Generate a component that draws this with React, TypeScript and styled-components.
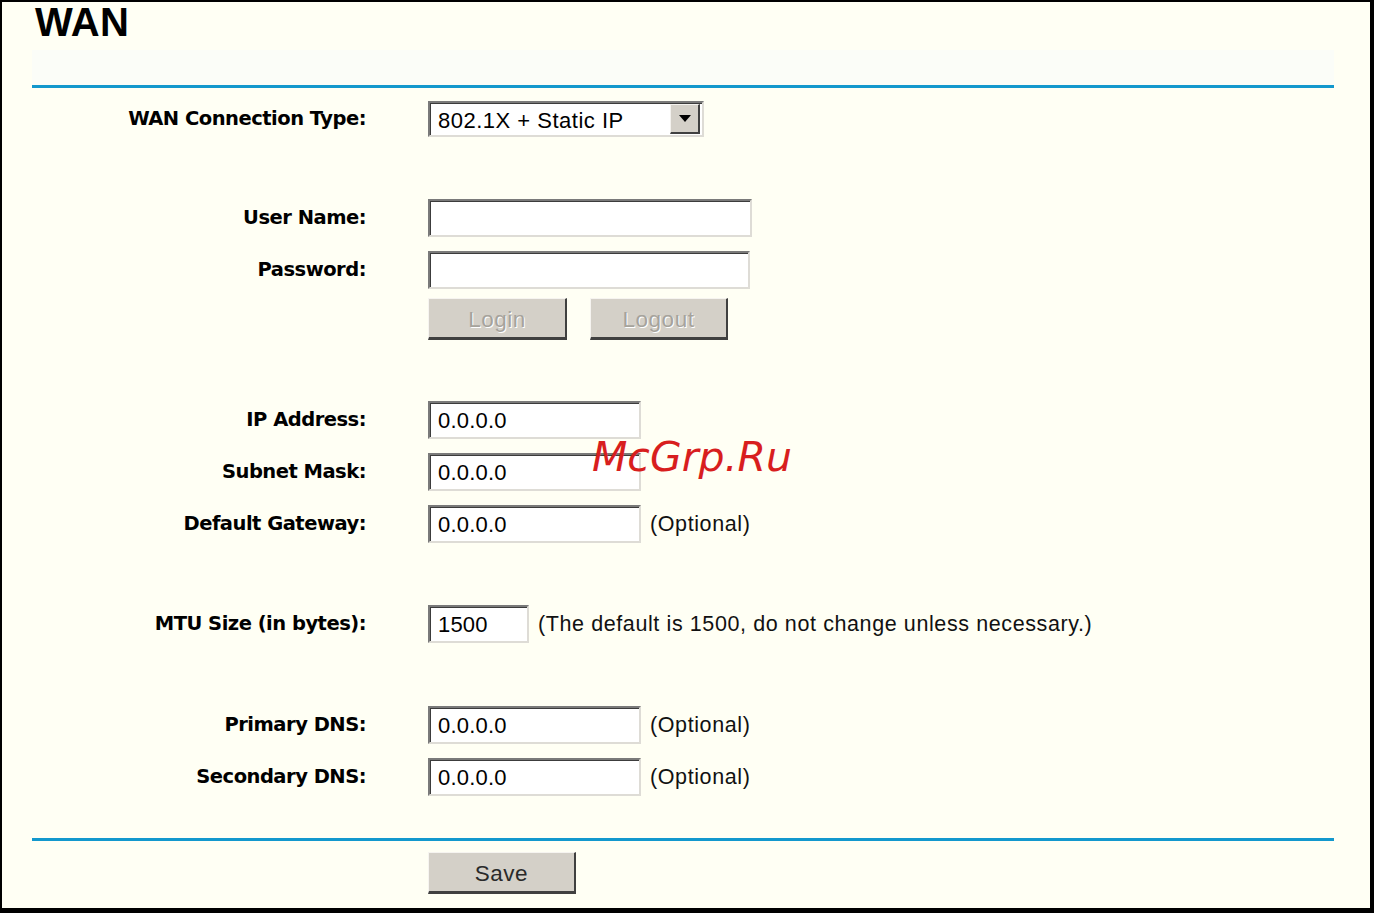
import React from 'react';
import styled, { createGlobalStyle } from 'styled-components';

const GlobalStyle = createGlobalStyle`
    html, body {
        margin: 0;
        padding: 0;
        overflow: hidden;
        background: #fffff4;
    }

    * {
        box-sizing: border-box;
    }
`;

const Frame = styled.div`
    position: relative;

    width: 1374px;
    height: 913px;

    border-style: solid;
    border-color: #000000;
    border-width: 2px 4px 5px 2px;

    background: #fffff4;

    font-family: "Liberation Sans", Arial, sans-serif;
    color: #000000;
`;

const TitleBar = styled.div`
    height: 48px;
    padding: 1px 0 0 33px;
`;

const Title = styled.h1`
    margin: 0;

    font-family: "Liberation Sans", Arial, sans-serif;
    font-weight: 700;
    font-size: 40px;
    line-height: 39px;
    letter-spacing: 0.3px;
`;

const Band = styled.div`
    width: 1302px;
    height: 35px;
    margin-left: 30px;

    background: #fbfdf8;
`;

const Rule = styled.div`
    width: 1302px;
    height: 3px;
    margin-left: 30px;

    background: #1398cd;
`;

const Form = styled.div`
    display: grid;
    grid-template-columns: 334px 1fr;
    column-gap: 62px;

    margin-left: 30px;
    padding-top: 5px;
`;

const Label = styled.div<{ $h?: number }>`
    display: flex;
    align-items: center;
    justify-content: flex-end;

    height: ${p => p.$h ?? 52}px;
    padding-bottom: 2px;

    font-family: "DejaVu Sans", Verdana, sans-serif;
    font-weight: 700;
    font-size: 19.5px;
    letter-spacing: -0.5px;
    white-space: nowrap;
`;

const Field = styled.div<{ $h?: number }>`
    display: flex;
    align-items: center;
    gap: 9px;

    height: ${p => p.$h ?? 52}px;
`;

const Spacer = styled.div<{ $h: number }>`
    grid-column: 1 / span 2;
    height: ${p => p.$h}px;
`;

const TextInput = styled.input<{ $w: number }>`
    width: ${p => p.$w}px;
    height: 38px;
    padding: 2px 0 0 8px;
    margin: 0;

    border-style: solid;
    border-width: 2px;
    border-color: #7a7a7a #dedcd6 #dedcd6 #7a7a7a;
    box-shadow: inset 1px 1px 0 #3c3c3c;
    border-radius: 0;

    background: #ffffff;
    outline: none;

    font-family: "Liberation Sans", Arial, sans-serif;
    font-size: 22px;
    letter-spacing: 0.2px;
    color: #000000;
`;

const Note = styled.span`
    font-family: "Liberation Sans", Arial, sans-serif;
    font-size: 21.5px;
    letter-spacing: 0.6px;
    color: #111111;
    white-space: nowrap;
`;

const SelectBox = styled.div`
    display: flex;
    align-items: center;
    justify-content: space-between;

    width: 276px;
    height: 36px;
    padding: 0 2px 0 8px;

    border-style: solid;
    border-width: 2px;
    border-color: #7a7a7a #dedcd6 #dedcd6 #7a7a7a;
    box-shadow: inset 1px 1px 0 #3c3c3c;

    background: #ffffff;

    font-size: 22px;
    letter-spacing: 0.5px;
`;

const SelectValue = styled.span`
    padding-top: 3px;
`;

const SelectArrow = styled.div`
    display: flex;
    align-items: center;
    justify-content: center;

    width: 30px;
    height: 30px;

    border-style: solid;
    border-width: 1px 2px 2px 1px;
    border-color: #f4f2ee #404040 #404040 #f4f2ee;

    background: #d4d0c8;
`;

const Buttons = styled.div`
    display: flex;
    gap: 23px;
`;

const Button = styled.button<{ $w: number; $disabled?: boolean }>`
    width: ${p => p.$w}px;
    height: 42px;
    padding: 3px 0 0;
    margin: 0;

    border-style: solid;
    border-width: 1px 2px 3px 1px;
    border-color: #f6f4f0 #404040 #404040 #f6f4f0;
    border-radius: 0;

    background: #d4d0c8;

    font-family: "Liberation Sans", Arial, sans-serif;
    font-size: 22.5px;
    letter-spacing: 0.5px;
    color: ${p => (p.$disabled ? '#a6a39c' : '#2a2a2a')};
    text-shadow: ${p => (p.$disabled ? '1px 1px 0 #ffffff' : 'none')};
`;

const SaveRow = styled.div`
    display: flex;

    margin-left: 426px;
    padding-top: 11px;
`;

const Watermark = styled.div`
    position: absolute;
    left: 590px;
    top: 435px;

    font-family: "DejaVu Sans", Verdana, sans-serif;
    font-style: italic;
    font-size: 41px;
    line-height: 41px;
    color: #d81e1e;

    pointer-events: none;
`;

const App: React.FC = () => {
    return (
        <Frame>
            <GlobalStyle />

            <TitleBar>
                <Title>WAN</Title>
            </TitleBar>
            <Band />
            <Rule />

            <Form>
                <Label>WAN Connection Type:</Label>
                <Field>
                    <SelectBox>
                        <SelectValue>802.1X + Static IP</SelectValue>
                        <SelectArrow>
                            <svg width="12" height="7" viewBox="0 0 12 7">
                                <path d="M0 0 H12 L6 7 Z" fill="#000000" />
                            </svg>
                        </SelectArrow>
                    </SelectBox>
                </Field>

                <Spacer $h={47} />

                <Label>User Name:</Label>
                <Field>
                    <TextInput $w={324} defaultValue="" />
                </Field>

                <Label>Password:</Label>
                <Field>
                    <TextInput $w={322} type="password" defaultValue="" />
                </Field>

                <Label $h={46} />
                <Field $h={46}>
                    <Buttons>
                        <Button $w={139} $disabled>Login</Button>
                        <Button $w={138} $disabled>Logout</Button>
                    </Buttons>
                </Field>

                <Spacer $h={52} />

                <Label>IP Address:</Label>
                <Field>
                    <TextInput $w={213} defaultValue="0.0.0.0" />
                </Field>

                <Label>Subnet Mask:</Label>
                <Field>
                    <TextInput $w={213} defaultValue="0.0.0.0" />
                </Field>

                <Label>Default Gateway:</Label>
                <Field>
                    <TextInput $w={213} defaultValue="0.0.0.0" />
                    <Note>(Optional)</Note>
                </Field>

                <Spacer $h={48} />

                <Label>MTU Size (in bytes):</Label>
                <Field>
                    <TextInput $w={101} defaultValue="1500" />
                    <Note>(The default is 1500, do not change unless necessary.)</Note>
                </Field>

                <Spacer $h={49} />

                <Label>Primary DNS:</Label>
                <Field>
                    <TextInput $w={213} defaultValue="0.0.0.0" />
                    <Note>(Optional)</Note>
                </Field>

                <Label>Secondary DNS:</Label>
                <Field>
                    <TextInput $w={213} defaultValue="0.0.0.0" />
                    <Note>(Optional)</Note>
                </Field>

                <Spacer $h={35} />
            </Form>

            <Rule />

            <SaveRow>
                <Button $w={148}>Save</Button>
            </SaveRow>

            <Watermark>McGrp.Ru</Watermark>
        </Frame>
    );
};

export default App;
